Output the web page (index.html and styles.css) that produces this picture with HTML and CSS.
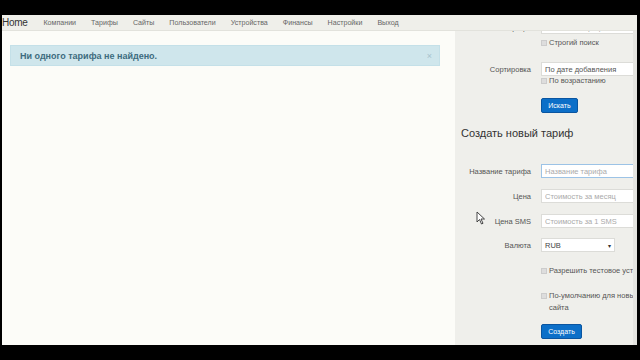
FILE: index.html
```html
<!DOCTYPE html>
<html lang="ru">
  <head>
    <meta charset="UTF-8" />
    <meta name="viewport" content="width=device-width, initial-scale=1.0" />
    <title>Тарифы</title>
    <link rel="stylesheet" href="styles.css">
  </head>
  <body>
    <div class="window">
      <!-- ========== NAVBAR ========== -->
      <div class="navbar">
        <a class="brand" href="#">Home</a>
        <a href="#">Компании</a>
        <a href="#">Тарифы</a>
        <a href="#">Сайты</a>
        <a href="#">Пользователи</a>
        <a href="#">Устройства</a>
        <a href="#">Финансы</a>
        <a href="#">Настройки</a>
        <a href="#">Выход</a>
      </div>

      <div class="content">
        <!-- ========== MAIN ========== -->
        <div class="main">
          <div class="alert">
            <span>Ни одного тарифа не найдено.</span>
            <span class="close">×</span>
          </div>
        </div>

        <!-- ========== SIDEBAR ========== -->
        <div class="sidebar">
          <div class="row first">
            <label class="name">Название тарифа</label>
            <input type="text" placeholder="Название тарифа" />
          </div>
          <div class="check check-strict"><span class="box"></span>Строгий поиск</div>
          <div class="row row-sort">
            <label class="name">Сортировка</label>
            <div class="select">По дате добавления</div>
          </div>
          <div class="check check-asc"><span class="box"></span>По возрастанию</div>
          <button class="btn btn-search">Искать</button>

          <h2>Создать новый тариф</h2>

          <div class="row row-title">
            <label class="name">Название тарифа</label>
            <input type="text" class="focus" placeholder="Название тарифа" />
          </div>
          <div class="row row-next">
            <label class="name">Цена</label>
            <input type="text" placeholder="Стоимость за месяц" />
          </div>
          <div class="row row-next">
            <label class="name">Цена SMS</label>
            <input type="text" placeholder="Стоимость за 1 SMS" />
          </div>
          <div class="row row-currency">
            <label class="name">Валюта</label>
            <div class="select short">RUB<span class="caret">▾</span></div>
          </div>
          <div class="check check-test"><span class="box"></span>Разрешить тестовое устройство</div>
          <div class="check check-default"><span class="box"></span><span>По-умолчанию для новых<br>сайта</span></div>
          <button class="btn btn-create">Создать</button>
        </div>

        <div class="scrollbar"></div>
      </div>

      <svg class="cursor" width="10" height="14" viewBox="0 0 10 14">
        <path d="M1 1 L1 11 L3.5 8.5 L5.5 13 L7 12.3 L5 8 L8.5 8 Z" fill="#fff" stroke="#333" stroke-width="0.9" />
      </svg>
    </div>
  </body>
</html>
```

FILE: styles.css
```css
* {
  margin: 0;
  padding: 0;
  box-sizing: border-box;
  font-family: "Liberation Sans", Arial, sans-serif;
}

body {
  background-color: #000;
  width: 640px;
  height: 360px;
  overflow: hidden;
  padding: 15px 3px 15px 2px;
}

.window {
  position: relative;
  height: 330px;
  display: flex;
  flex-direction: column;
  background-color: #fcfcf8;
  overflow: hidden;
}

/* ========== NAVBAR ========== */
.navbar {
  height: 16px;
  display: flex;
  align-items: center;
  gap: 15px;
  background-color: #efefea;
  border-bottom: 1px solid #e2e2dc;
}

.navbar a {
  text-decoration: none;
  color: #666;
  font-size: 7.1px;
}

.navbar .brand {
  color: #333;
  font-size: 10px;
  letter-spacing: -0.3px;
  margin-right: 1px;
}

.content {
  flex: 1;
  display: flex;
  min-height: 0;
}

/* ========== MAIN ========== */
.main {
  width: 453px;
  padding: 14px 15px 0 8px;
}

.alert {
  height: 21px;
  display: flex;
  align-items: center;
  justify-content: space-between;
  padding: 0 7px 0 9px;
  background-color: #cfe6ec;
  border: 1px solid #c4e0e8;
  color: #3d6b7e;
  font-size: 9px;
  font-weight: bold;
}

.alert .close {
  color: #a7c3cc;
  font-weight: normal;
  font-size: 9px;
}

/* ========== SIDEBAR ========== */
.sidebar {
  width: 178px;
  background-color: #efefeb;
  padding-left: 6px;
  overflow: hidden;
  font-size: 7.5px;
  color: #555;
}

.row {
  display: flex;
  align-items: center;
  height: 14px;
}

.row .name {
  width: 80px;
  text-align: right;
  padding-right: 10px;
  flex-shrink: 0;
  white-space: nowrap;
}

.row input,
.select {
  height: 14px;
  width: 100px;
  flex-shrink: 0;
  border: 1px solid #dcdcd8;
  background-color: #fff;
  padding: 0 3px;
  font-size: 7.5px;
  color: #555;
  display: flex;
  align-items: center;
}

.row input::placeholder {
  color: #aaa;
}

.row input.focus {
  border-color: #9cc3e6;
}

.select.short {
  width: 74px;
  justify-content: space-between;
  color: #444;
}

.select .caret {
  font-size: 6px;
  color: #333;
}

.check {
  display: flex;
  align-items: flex-start;
  padding-left: 80px;
  line-height: 12px;
  height: 12px;
  white-space: nowrap;
}

.check .box {
  width: 6px;
  height: 6px;
  margin: 3px 2px 0 0;
  border: 1px solid #ccc;
  background-color: #ddd;
  flex-shrink: 0;
}

.btn {
  display: block;
  height: 15px;
  margin-left: 80px;
  padding: 0 6px;
  background-color: #0c6fc8;
  border: 1px solid #0a55a0;
  border-radius: 2px;
  color: #fff;
  font-size: 7px;
}

h2 {
  font-size: 11px;
  font-weight: normal;
  line-height: 14px;
  color: #333;
  margin-top: 13px;
}

.first { margin-top: -11px; }
.check-strict { margin-top: 3px; }
.row-sort { margin-top: 13px; }
.check-asc { margin-top: 0; height: 10px; line-height: 10px; }
.check-asc .box { margin-top: 2px; }
.btn-search { margin-top: 12px; width: 37px; }
.row-title { margin-top: 24px; }
.row-next { margin-top: 11px; }
.row-currency { margin-top: 10px; }
.check-test { margin-top: 13px; }
.check-default { margin-top: 13px; height: 24px; }
.btn-create { margin-top: 10px; width: 41px; }

.scrollbar {
  width: 4px;
  background-color: #e4e4e0;
}

.cursor {
  position: absolute;
  left: 474px;
  top: 196px;
}
```
